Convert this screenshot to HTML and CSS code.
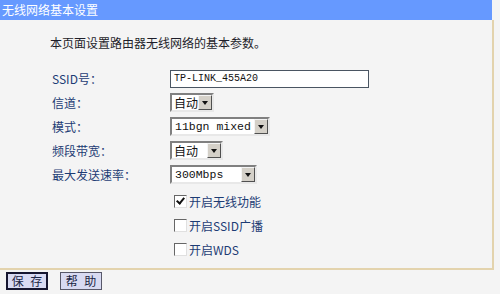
FILE: index.html
```html
<!DOCTYPE html>
<html lang="zh-CN">
<head>
    <meta charset="UTF-8">
    <title>无线网络基本设置</title>
    <link rel="stylesheet" href="styles.css">
</head>
<body>

    <div class="panel">
        <div class="panel-title">无线网络基本设置</div>
        <div class="panel-body">
            <p class="intro">本页面设置路由器无线网络的基本参数。</p>

            <div class="form-grid">
                <span class="label">SSID号：</span>
                <div class="text-input">TP-LINK_455A20</div>

                <span class="label">信道：</span>
                <div class="select w-channel"><span class="value">自动</span><span class="arrow"></span></div>

                <span class="label">模式：</span>
                <div class="select w-mode"><span class="value mono">11bgn mixed</span><span class="arrow"></span></div>

                <span class="label">频段带宽：</span>
                <div class="select w-width"><span class="value">自动</span><span class="arrow"></span></div>

                <span class="label">最大发送速率：</span>
                <div class="select w-rate"><span class="value mono">300Mbps</span><span class="arrow"></span></div>
            </div>

            <div class="checks">
                <label class="check"><span class="box checked"></span>开启无线功能</label>
                <label class="check"><span class="box"></span>开启SSID广播</label>
                <label class="check"><span class="box"></span>开启WDS</label>
            </div>
        </div>
    </div>

    <div class="footer">
        <button class="btn btn-default">保 存</button>
        <button class="btn">帮 助</button>
    </div>

</body>
</html>
```

FILE: styles.css
```css
body {
    margin: 0;
    background-color: #f4f4f4;
    font-family: "Noto Sans CJK SC", "Liberation Sans", sans-serif;
    font-size: 12px;
    width: 500px;
    height: 294px;
    overflow: hidden;
}
.panel {
    width: 494px;
}
.panel-title {
    width: 492px;
    height: 20px;
    line-height: 20px;
    padding-left: 2px;
    box-sizing: border-box;
    background-color: #6699ff;
    color: white;
    font-size: 12px;
}
.panel-body {
    height: 250px;
    box-sizing: border-box;
    border-right: 2px solid #e3d3ad;
    border-bottom: 2px solid #e3d3ad;
    padding: 14px 0 0 50px;
}
.intro {
    margin: 0 0 16px 0;
    line-height: 17px;
    color: #1e1e2a;
}
.form-grid {
    display: grid;
    grid-template-columns: 120px auto;
    grid-auto-rows: 23.8px;
    align-items: center;
    justify-items: start;
}
.label {
    padding-left: 2px;
    color: #1d3c74;
}
.text-input {
    width: 199px;
    height: 18px;
    box-sizing: border-box;
    border: 1px solid #4a5562;
    background: white;
    font-family: "Liberation Mono", monospace;
    font-size: 10px;
    line-height: 16px;
    padding-left: 3px;
    color: #111;
}
.select {
    height: 19px;
    box-sizing: border-box;
    display: flex;
    align-items: center;
    justify-content: space-between;
    background: white;
    border: 2px solid;
    border-color: #808080 #e8e8e8 #e8e8e8 #808080;
    color: #111;
    white-space: nowrap;
}
.select .value {
    padding-left: 2px;
    line-height: 15px;
}
.select .mono {
    font-family: "Liberation Mono", monospace;
    font-size: 11.5px;
    padding-left: 3px;
}
.select .arrow {
    flex-shrink: 0;
    width: 14px;
    height: 15px;
    box-sizing: border-box;
    background-color: #d4d0c8;
    border: 1px solid;
    border-color: #f4f4f4 #505050 #505050 #f4f4f4;
    position: relative;
}
.select .arrow::after {
    content: "";
    position: absolute;
    left: 3px;
    top: 5px;
    border-left: 3.5px solid transparent;
    border-right: 3.5px solid transparent;
    border-top: 4px solid #111;
}
.w-channel { width: 44px; }
.w-mode { width: 100px; }
.w-width { width: 53px; }
.w-rate { width: 87px; }
.checks {
    margin-top: 4px;
    padding-left: 124px;
    display: flex;
    flex-direction: column;
}
.check {
    height: 24px;
    display: flex;
    align-items: center;
    color: #1d3c74;
}
.box {
    width: 13px;
    height: 13px;
    box-sizing: border-box;
    border: 1px solid;
    border-color: #666 #e0e0e0 #e0e0e0 #666;
    background: white;
    margin-right: 2px;
    position: relative;
}
.box.checked::after {
    content: "";
    position: absolute;
    left: 3px;
    top: 0px;
    width: 3px;
    height: 6px;
    border-right: 2px solid #111;
    border-bottom: 2px solid #111;
    transform: rotate(40deg);
}
.footer {
    display: flex;
    gap: 12px;
    padding: 2px 0 0 6px;
}
.btn {
    height: 18px;
    width: 42px;
    padding: 0;
    background-color: #d8daf2;
    border: 1px solid #58586a;
    color: #1a2444;
    font-family: "Noto Sans CJK SC", sans-serif;
    font-size: 12px;
    line-height: 14px;
    word-spacing: 4px;
    white-space: nowrap;
    cursor: pointer;
}
.btn-default {
    border: 2px solid #161630;
}
```
